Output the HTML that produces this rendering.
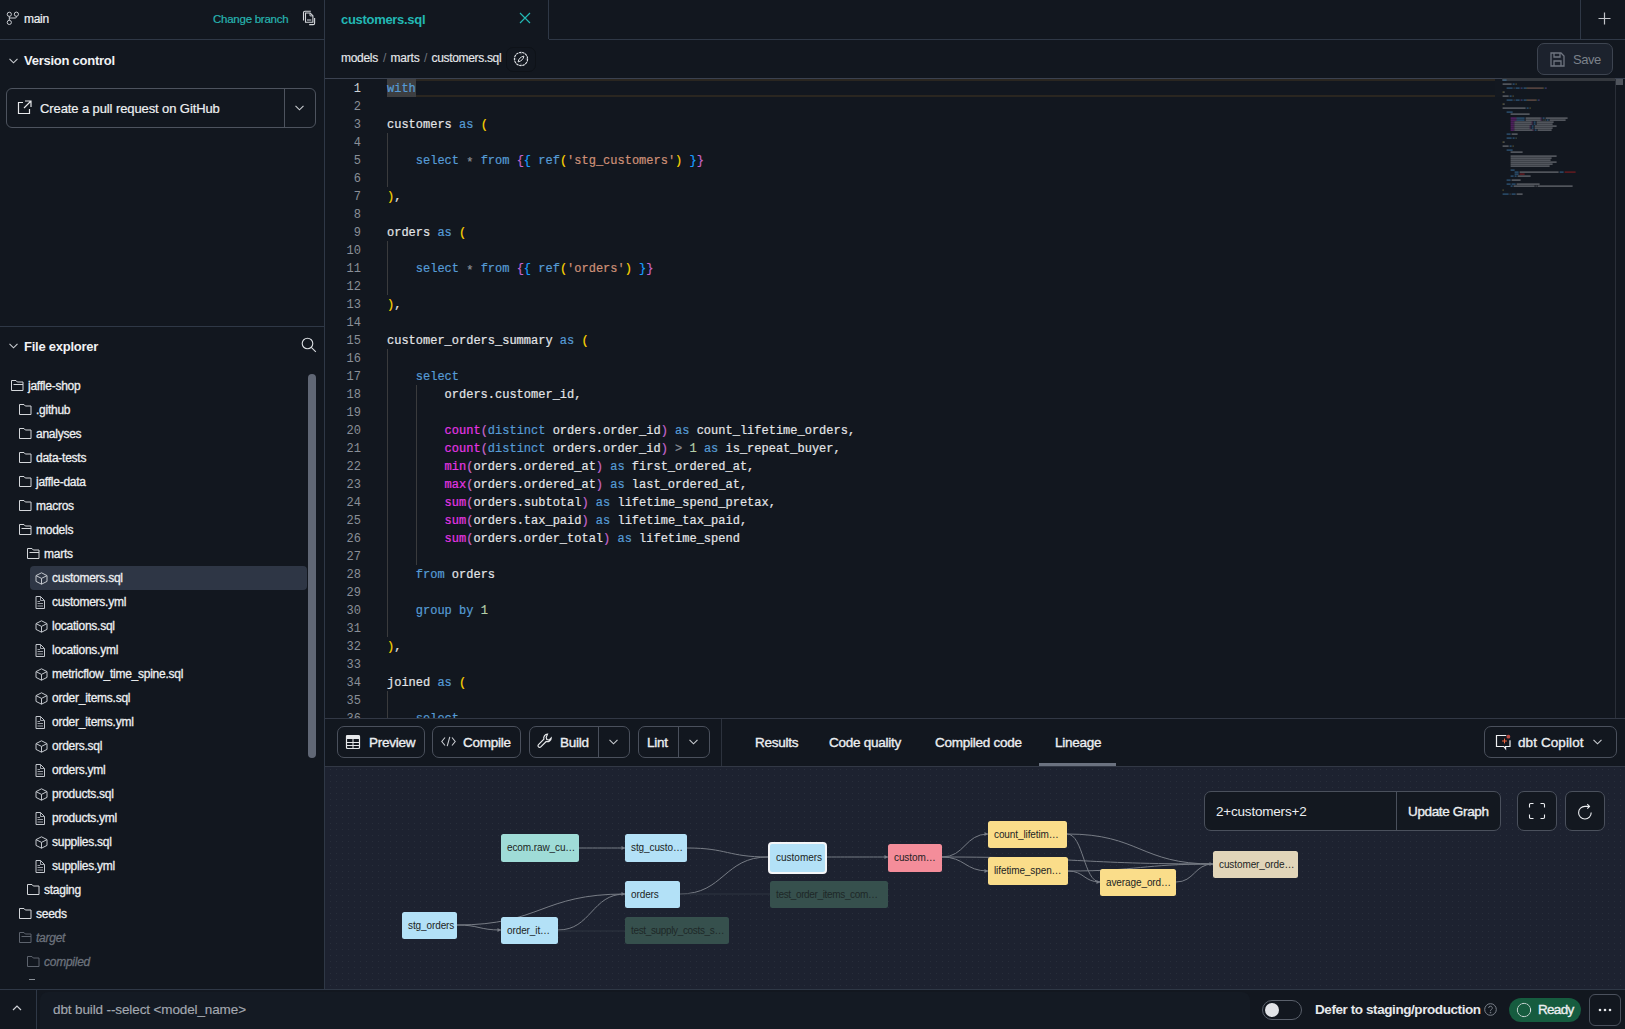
<!DOCTYPE html>
<html><head><meta charset="utf-8">
<style>
*{box-sizing:border-box;margin:0;padding:0}
html,body{width:1625px;height:1029px;overflow:hidden;background:#12171f;font-family:"Liberation Sans",sans-serif;color:#e6e8eb}
.a{position:absolute}
.t{white-space:pre;position:absolute;line-height:1}
.b{position:absolute;background:#2f3846}
svg{position:absolute;overflow:visible}
/* tree */
.tr{position:absolute;height:24px;font-size:12px;white-space:pre;line-height:24px;letter-spacing:-0.25px;color:#eef0f2;-webkit-text-stroke:0.28px currentColor}
.tr svg{top:6px}
/* code */
.ln{position:absolute;left:325px;width:36px;text-align:right;font-family:"Liberation Mono",monospace;font-size:12px;color:#8a8f98;line-height:18px;height:18px}
.cl{position:absolute;left:387px;font-family:"Liberation Mono",monospace;font-size:12px;color:#e3e5e8;line-height:18px;height:18px;white-space:pre;-webkit-text-stroke:0.2px currentColor}
.k{color:#569cd6}.f{color:#e535e5}.s{color:#ce9178}.y{color:#ffd700}.o{color:#c766cc}.u{color:#179fff}.g{color:#8b8f96}.n{color:#b5cea8}
.btn{position:absolute;border:1px solid #4a505c;border-radius:7px;height:32px}
.bt{position:absolute;font-size:13.5px;font-weight:400;-webkit-text-stroke:0.35px currentColor;letter-spacing:-0.25px;white-space:pre;line-height:1;color:#eceef1}
</style></head><body>

<!-- ============ SIDEBAR ============ -->
<div class="a" style="left:0;top:0;width:324px;height:989px;background:#12171f"></div>
<div class="b" style="left:324px;top:0;width:1px;height:989px"></div>
<div class="b" style="left:0;top:39px;width:324px;height:1px"></div>

<!-- branch icon -->
<svg style="left:6px;top:10px" width="14" height="16" viewBox="0 0 14 16" fill="none" stroke="#c9ccd1" stroke-width="1">
<circle cx="3.3" cy="4.3" r="2.1"/><circle cx="3.3" cy="12.4" r="2.1"/><circle cx="10.4" cy="4.2" r="2.1"/>
<path d="M3.3 6.4V10.3M10.4 6.3V7Q10.4 8 9.4 8H3.3"/></svg>
<div class="t" style="left:24px;top:13px;font-size:12px;color:#eef0f2;letter-spacing:-0.3px;-webkit-text-stroke:0.2px currentColor">main</div>
<div class="t" style="left:213px;top:14px;font-size:11.5px;color:#27b4b0;-webkit-text-stroke:0.2px currentColor;letter-spacing:-0.25px">Change branch</div>
<!-- copy icon -->
<svg style="left:300px;top:9px" width="18" height="18" viewBox="0 0 18 18" fill="none" stroke="#d4d7db" stroke-width="1.1">
<path d="M3.5 11.5V3.6Q3.5 2.2 4.9 2.2H10.8"/><path d="M14.6 9V14.2Q14.6 15.6 13.2 15.6H9.2"/>
<path d="M5.5 4H10.2L12.9 6.7V13.3H5.5Z"/><path d="M10 4V6.9H12.9" stroke-width="0.9"/><rect x="7" y="10.2" width="4.3" height="1.6" fill="#8d9198" stroke="none"/></svg>
<!-- version control -->
<svg style="left:9px;top:58px" width="9" height="6" viewBox="0 0 9 6" fill="none" stroke="#c9ccd1" stroke-width="1.1"><path d="M0.5 0.8L4.5 4.8L8.5 0.8"/></svg>
<div class="t" style="left:24px;top:54px;font-size:13px;font-weight:700;color:#f1f2f4;letter-spacing:-0.25px">Version control</div>

<div class="a" style="left:6px;top:88px;width:310px;height:40px;border:1px solid #4d535e;border-radius:6px"></div>
<div class="b" style="left:284px;top:89px;width:1px;height:38px;background:#4d535e"></div>
<svg style="left:17px;top:100px" width="15" height="15" viewBox="0 0 15 15" fill="none" stroke="#e6e8eb" stroke-width="1.2">
<path d="M6 2.5H1.5V13.5H12.5V9"/><path d="M8 1H14V7M14 1L7 8"/></svg>
<div class="t" style="left:40px;top:102px;font-size:13px;color:#eef0f2;letter-spacing:-0.1px;-webkit-text-stroke:0.2px currentColor">Create a pull request on GitHub</div>
<svg style="left:295px;top:105px" width="9" height="6" viewBox="0 0 9 6" fill="none" stroke="#c9ccd1" stroke-width="1.1"><path d="M0.5 0.8L4.5 4.8L8.5 0.8"/></svg>

<div class="b" style="left:0;top:326px;width:324px;height:1px"></div>

<!-- file explorer -->
<svg style="left:9px;top:343px" width="9" height="6" viewBox="0 0 9 6" fill="none" stroke="#c9ccd1" stroke-width="1.1"><path d="M0.5 0.8L4.5 4.8L8.5 0.8"/></svg>
<div class="t" style="left:24px;top:340px;font-size:13px;font-weight:700;color:#f1f2f4;letter-spacing:-0.25px">File explorer</div>
<svg style="left:301px;top:337px" width="16" height="16" viewBox="0 0 16 16" fill="none" stroke="#d9dce0" stroke-width="1.1">
<circle cx="6.5" cy="6.5" r="5.3"/><path d="M10.3 10.3L14.8 14.8"/></svg>

<!-- scrollbar -->
<div class="a" style="left:308px;top:374px;width:8px;height:384px;border-radius:4px;background:#606775"></div>

<!-- TREE -->
<svg style="left:11px;top:380px" width="13" height="12" viewBox="0 0 13 12" fill="none" stroke="#d4d7db" stroke-width="1"><path d="M0.5 0.5H5L6.3 2H12V10.5H0.5Z"/><path d="M2.5 4.5H12"/></svg>
<div class="tr" style="left:28px;top:374px">jaffle-shop</div>
<svg style="left:19px;top:404px" width="13" height="12" viewBox="0 0 13 12" fill="none" stroke="#d4d7db" stroke-width="1"><path d="M0.5 0.5H5L6.3 2H12V10.5H0.5Z"/></svg>
<div class="tr" style="left:36px;top:398px">.github</div>
<svg style="left:19px;top:428px" width="13" height="12" viewBox="0 0 13 12" fill="none" stroke="#d4d7db" stroke-width="1"><path d="M0.5 0.5H5L6.3 2H12V10.5H0.5Z"/></svg>
<div class="tr" style="left:36px;top:422px">analyses</div>
<svg style="left:19px;top:452px" width="13" height="12" viewBox="0 0 13 12" fill="none" stroke="#d4d7db" stroke-width="1"><path d="M0.5 0.5H5L6.3 2H12V10.5H0.5Z"/></svg>
<div class="tr" style="left:36px;top:446px">data-tests</div>
<svg style="left:19px;top:476px" width="13" height="12" viewBox="0 0 13 12" fill="none" stroke="#d4d7db" stroke-width="1"><path d="M0.5 0.5H5L6.3 2H12V10.5H0.5Z"/></svg>
<div class="tr" style="left:36px;top:470px">jaffle-data</div>
<svg style="left:19px;top:500px" width="13" height="12" viewBox="0 0 13 12" fill="none" stroke="#d4d7db" stroke-width="1"><path d="M0.5 0.5H5L6.3 2H12V10.5H0.5Z"/></svg>
<div class="tr" style="left:36px;top:494px">macros</div>
<svg style="left:19px;top:524px" width="13" height="12" viewBox="0 0 13 12" fill="none" stroke="#d4d7db" stroke-width="1"><path d="M0.5 0.5H5L6.3 2H12V10.5H0.5Z"/><path d="M2.5 4.5H12"/></svg>
<div class="tr" style="left:36px;top:518px">models</div>
<svg style="left:27px;top:548px" width="13" height="12" viewBox="0 0 13 12" fill="none" stroke="#d4d7db" stroke-width="1"><path d="M0.5 0.5H5L6.3 2H12V10.5H0.5Z"/><path d="M2.5 4.5H12"/></svg>
<div class="tr" style="left:44px;top:542px">marts</div>
<div class="a" style="left:30px;top:566px;width:277px;height:24px;border-radius:4px;background:#2e3645"></div>
<svg style="left:35px;top:572px" width="13" height="13" viewBox="0 0 13 13" fill="none" stroke="#c3c7cd" stroke-width="1"><path d="M6.5 0.8L12 3.6V9.4L6.5 12.2L1 9.4V3.6Z"/><path d="M1 3.6L6.5 6.4L12 3.6M6.5 6.4V12.2"/></svg>
<div class="tr" style="left:52px;top:566px">customers.sql</div>
<svg style="left:35px;top:596px" width="11" height="13" viewBox="0 0 11 13" fill="none" stroke="#c3c7cd" stroke-width="1"><path d="M1 0.5H5.5L9.5 4.5V12.5H1Z"/><path d="M5.5 0.5V4.5H9.5" stroke-width="0.8"/><path d="M2.5 5.5H5M2.5 7.5H8M2.5 10H8" stroke="#9a9ea5"/></svg>
<div class="tr" style="left:52px;top:590px">customers.yml</div>
<svg style="left:35px;top:620px" width="13" height="13" viewBox="0 0 13 13" fill="none" stroke="#c3c7cd" stroke-width="1"><path d="M6.5 0.8L12 3.6V9.4L6.5 12.2L1 9.4V3.6Z"/><path d="M1 3.6L6.5 6.4L12 3.6M6.5 6.4V12.2"/></svg>
<div class="tr" style="left:52px;top:614px">locations.sql</div>
<svg style="left:35px;top:644px" width="11" height="13" viewBox="0 0 11 13" fill="none" stroke="#c3c7cd" stroke-width="1"><path d="M1 0.5H5.5L9.5 4.5V12.5H1Z"/><path d="M5.5 0.5V4.5H9.5" stroke-width="0.8"/><path d="M2.5 5.5H5M2.5 7.5H8M2.5 10H8" stroke="#9a9ea5"/></svg>
<div class="tr" style="left:52px;top:638px">locations.yml</div>
<svg style="left:35px;top:668px" width="13" height="13" viewBox="0 0 13 13" fill="none" stroke="#c3c7cd" stroke-width="1"><path d="M6.5 0.8L12 3.6V9.4L6.5 12.2L1 9.4V3.6Z"/><path d="M1 3.6L6.5 6.4L12 3.6M6.5 6.4V12.2"/></svg>
<div class="tr" style="left:52px;top:662px">metricflow_time_spine.sql</div>
<svg style="left:35px;top:692px" width="13" height="13" viewBox="0 0 13 13" fill="none" stroke="#c3c7cd" stroke-width="1"><path d="M6.5 0.8L12 3.6V9.4L6.5 12.2L1 9.4V3.6Z"/><path d="M1 3.6L6.5 6.4L12 3.6M6.5 6.4V12.2"/></svg>
<div class="tr" style="left:52px;top:686px">order_items.sql</div>
<svg style="left:35px;top:716px" width="11" height="13" viewBox="0 0 11 13" fill="none" stroke="#c3c7cd" stroke-width="1"><path d="M1 0.5H5.5L9.5 4.5V12.5H1Z"/><path d="M5.5 0.5V4.5H9.5" stroke-width="0.8"/><path d="M2.5 5.5H5M2.5 7.5H8M2.5 10H8" stroke="#9a9ea5"/></svg>
<div class="tr" style="left:52px;top:710px">order_items.yml</div>
<svg style="left:35px;top:740px" width="13" height="13" viewBox="0 0 13 13" fill="none" stroke="#c3c7cd" stroke-width="1"><path d="M6.5 0.8L12 3.6V9.4L6.5 12.2L1 9.4V3.6Z"/><path d="M1 3.6L6.5 6.4L12 3.6M6.5 6.4V12.2"/></svg>
<div class="tr" style="left:52px;top:734px">orders.sql</div>
<svg style="left:35px;top:764px" width="11" height="13" viewBox="0 0 11 13" fill="none" stroke="#c3c7cd" stroke-width="1"><path d="M1 0.5H5.5L9.5 4.5V12.5H1Z"/><path d="M5.5 0.5V4.5H9.5" stroke-width="0.8"/><path d="M2.5 5.5H5M2.5 7.5H8M2.5 10H8" stroke="#9a9ea5"/></svg>
<div class="tr" style="left:52px;top:758px">orders.yml</div>
<svg style="left:35px;top:788px" width="13" height="13" viewBox="0 0 13 13" fill="none" stroke="#c3c7cd" stroke-width="1"><path d="M6.5 0.8L12 3.6V9.4L6.5 12.2L1 9.4V3.6Z"/><path d="M1 3.6L6.5 6.4L12 3.6M6.5 6.4V12.2"/></svg>
<div class="tr" style="left:52px;top:782px">products.sql</div>
<svg style="left:35px;top:812px" width="11" height="13" viewBox="0 0 11 13" fill="none" stroke="#c3c7cd" stroke-width="1"><path d="M1 0.5H5.5L9.5 4.5V12.5H1Z"/><path d="M5.5 0.5V4.5H9.5" stroke-width="0.8"/><path d="M2.5 5.5H5M2.5 7.5H8M2.5 10H8" stroke="#9a9ea5"/></svg>
<div class="tr" style="left:52px;top:806px">products.yml</div>
<svg style="left:35px;top:836px" width="13" height="13" viewBox="0 0 13 13" fill="none" stroke="#c3c7cd" stroke-width="1"><path d="M6.5 0.8L12 3.6V9.4L6.5 12.2L1 9.4V3.6Z"/><path d="M1 3.6L6.5 6.4L12 3.6M6.5 6.4V12.2"/></svg>
<div class="tr" style="left:52px;top:830px">supplies.sql</div>
<svg style="left:35px;top:860px" width="11" height="13" viewBox="0 0 11 13" fill="none" stroke="#c3c7cd" stroke-width="1"><path d="M1 0.5H5.5L9.5 4.5V12.5H1Z"/><path d="M5.5 0.5V4.5H9.5" stroke-width="0.8"/><path d="M2.5 5.5H5M2.5 7.5H8M2.5 10H8" stroke="#9a9ea5"/></svg>
<div class="tr" style="left:52px;top:854px">supplies.yml</div>
<svg style="left:27px;top:884px" width="13" height="12" viewBox="0 0 13 12" fill="none" stroke="#d4d7db" stroke-width="1"><path d="M0.5 0.5H5L6.3 2H12V10.5H0.5Z"/></svg>
<div class="tr" style="left:44px;top:878px">staging</div>
<svg style="left:19px;top:908px" width="13" height="12" viewBox="0 0 13 12" fill="none" stroke="#d4d7db" stroke-width="1"><path d="M0.5 0.5H5L6.3 2H12V10.5H0.5Z"/></svg>
<div class="tr" style="left:36px;top:902px">seeds</div>
<svg style="left:19px;top:932px" width="13" height="12" viewBox="0 0 13 12" fill="none" stroke="#5d636d" stroke-width="1"><path d="M0.5 0.5H5L6.3 2H12V10.5H0.5Z"/><path d="M2.5 4.5H12"/></svg>
<div class="tr" style="left:36px;top:926px;font-style:italic;color:#6c727c">target</div>
<svg style="left:27px;top:956px" width="13" height="12" viewBox="0 0 13 12" fill="none" stroke="#5d636d" stroke-width="1"><path d="M0.5 0.5H5L6.3 2H12V10.5H0.5Z"/></svg>
<div class="tr" style="left:44px;top:950px;font-style:italic;color:#6c727c">compiled</div>
<div class="a" style="left:29px;top:979px;width:6px;height:1px;background:#8a9098"></div>


<!-- ============ MAIN: TABS ============ -->
<div class="b" style="left:548px;top:0;width:1px;height:39px"></div>
<div class="b" style="left:549px;top:39px;width:1076px;height:1px"></div>
<div class="b" style="left:1580px;top:0;width:1px;height:39px"></div>
<div class="t" style="left:341px;top:13px;font-size:13px;font-weight:700;color:#22b8b4;letter-spacing:-0.3px">customers.sql</div>
<svg style="left:519px;top:12px" width="12" height="12" viewBox="0 0 12 12" fill="none" stroke="#22b8b4" stroke-width="1.2"><path d="M1 1L11 11M11 1L1 11"/></svg>
<svg style="left:1598px;top:12px" width="13" height="13" viewBox="0 0 13 13" fill="none" stroke="#c2c5ca" stroke-width="1.2"><path d="M6.5 0.5V12.5M0.5 6.5H12.5"/></svg>

<!-- breadcrumb -->
<div class="t" style="left:341px;top:52px;font-size:12px;color:#e6e8eb;letter-spacing:-0.3px;-webkit-text-stroke:0.15px currentColor">models</div>
<div class="t" style="left:383px;top:52px;font-size:12px;color:#6f757e">/</div>
<div class="t" style="left:390.5px;top:52px;font-size:12px;color:#e6e8eb;letter-spacing:-0.2px;-webkit-text-stroke:0.15px currentColor">marts</div>
<div class="t" style="left:424px;top:52px;font-size:12px;color:#6f757e">/</div>
<div class="t" style="left:431.5px;top:52px;font-size:12px;color:#e6e8eb;letter-spacing:-0.33px;-webkit-text-stroke:0.15px currentColor">customers.sql</div>
<div class="a" style="left:506px;top:47px;width:30px;height:25px;border-radius:7px;border:1px solid #0e1218;background:#12171f"></div>
<svg style="left:513px;top:51px" width="16" height="16" viewBox="0 0 16 16" fill="none" stroke="#dfe2e6" stroke-width="1.1">
<circle cx="8" cy="8" r="6.6" stroke-dasharray="2.6 0.6"/><path d="M8 2.2V3.4M8 12.6V13.8M2.2 8H3.4M12.6 8H13.8" stroke="#8a8f96" stroke-width="0.9"/><path d="M10.9 5.1Q10.3 9.6 5.1 10.9Q5.7 6.4 10.9 5.1Z" stroke-width="1"/></svg>
<div class="a" style="left:1537px;top:43px;width:76px;height:32px;border:1px solid #3d4450;border-radius:7px;background:#1c222d"></div>
<svg style="left:1550px;top:52px" width="15" height="15" viewBox="0 0 15 15" fill="none" stroke="#6f7580" stroke-width="1.3"><path d="M1 1H11L14 4V14H1Z"/><path d="M4 1V5H10V1M4 14V9H11V14"/></svg>
<div class="t" style="left:1573px;top:53px;font-size:13px;color:#7b818a;letter-spacing:-0.5px">Save</div>
<div class="b" style="left:325px;top:78px;width:1300px;height:1px;background:#3b4250"></div>

<!-- ============ EDITOR ============ -->
<div class="a" style="left:0;top:0;width:1625px;height:718px;overflow:hidden">
<div class="a" style="left:387px;top:79px;width:1109px;height:18px;border-top:2px solid #2a2620;border-bottom:2px solid #2a2620"></div>
<div class="a" style="left:387px;top:79px;width:29px;height:18px;background:#3d3e40"></div>
<div class="a" style="left:387px;top:133px;width:1px;height:54px;background:#3a3b3d"></div>
<div class="a" style="left:387px;top:241px;width:1px;height:54px;background:#3a3b3d"></div>
<div class="a" style="left:387px;top:349px;width:1px;height:288px;background:#3a3b3d"></div>
<div class="a" style="left:387px;top:691px;width:1px;height:36px;background:#3a3b3d"></div>
<div class="a" style="left:416px;top:385px;width:1px;height:180px;background:#3a3b3d"></div>
<div class="ln" style="top:80px;color:#cfd2d6">1</div>
<div class="cl" style="top:80px"><span class="k">with</span></div>
<div class="ln" style="top:98px">2</div>
<div class="ln" style="top:116px">3</div>
<div class="cl" style="top:116px">customers <span class="k">as</span> <span class="y">(</span></div>
<div class="ln" style="top:134px">4</div>
<div class="ln" style="top:152px">5</div>
<div class="cl" style="top:152px">    <span class="k">select</span> <span class="g" style="position:relative;top:2px">*</span> <span class="k">from</span> <span class="o">{</span><span class="u">{</span> <span class="k">ref</span><span class="y">(</span><span class="s">'stg_customers'</span><span class="y">)</span> <span class="u">}</span><span class="o">}</span></div>
<div class="ln" style="top:170px">6</div>
<div class="ln" style="top:188px">7</div>
<div class="cl" style="top:188px"><span class="y">)</span>,</div>
<div class="ln" style="top:206px">8</div>
<div class="ln" style="top:224px">9</div>
<div class="cl" style="top:224px">orders <span class="k">as</span> <span class="y">(</span></div>
<div class="ln" style="top:242px">10</div>
<div class="ln" style="top:260px">11</div>
<div class="cl" style="top:260px">    <span class="k">select</span> <span class="g" style="position:relative;top:2px">*</span> <span class="k">from</span> <span class="o">{</span><span class="u">{</span> <span class="k">ref</span><span class="y">(</span><span class="s">'orders'</span><span class="y">)</span> <span class="u">}</span><span class="o">}</span></div>
<div class="ln" style="top:278px">12</div>
<div class="ln" style="top:296px">13</div>
<div class="cl" style="top:296px"><span class="y">)</span>,</div>
<div class="ln" style="top:314px">14</div>
<div class="ln" style="top:332px">15</div>
<div class="cl" style="top:332px">customer_orders_summary <span class="k">as</span> <span class="y">(</span></div>
<div class="ln" style="top:350px">16</div>
<div class="ln" style="top:368px">17</div>
<div class="cl" style="top:368px">    <span class="k">select</span></div>
<div class="ln" style="top:386px">18</div>
<div class="cl" style="top:386px">        orders.customer_id,</div>
<div class="ln" style="top:404px">19</div>
<div class="ln" style="top:422px">20</div>
<div class="cl" style="top:422px">        <span class="f">count</span><span class="o">(</span><span class="k">distinct</span> orders.order_id<span class="o">)</span> <span class="k">as</span> count_lifetime_orders,</div>
<div class="ln" style="top:440px">21</div>
<div class="cl" style="top:440px">        <span class="f">count</span><span class="o">(</span><span class="k">distinct</span> orders.order_id<span class="o">)</span> <span class="g">&gt;</span> <span class="n">1</span> <span class="k">as</span> is_repeat_buyer,</div>
<div class="ln" style="top:458px">22</div>
<div class="cl" style="top:458px">        <span class="f">min</span><span class="o">(</span>orders.ordered_at<span class="o">)</span> <span class="k">as</span> first_ordered_at,</div>
<div class="ln" style="top:476px">23</div>
<div class="cl" style="top:476px">        <span class="f">max</span><span class="o">(</span>orders.ordered_at<span class="o">)</span> <span class="k">as</span> last_ordered_at,</div>
<div class="ln" style="top:494px">24</div>
<div class="cl" style="top:494px">        <span class="f">sum</span><span class="o">(</span>orders.subtotal<span class="o">)</span> <span class="k">as</span> lifetime_spend_pretax,</div>
<div class="ln" style="top:512px">25</div>
<div class="cl" style="top:512px">        <span class="f">sum</span><span class="o">(</span>orders.tax_paid<span class="o">)</span> <span class="k">as</span> lifetime_tax_paid,</div>
<div class="ln" style="top:530px">26</div>
<div class="cl" style="top:530px">        <span class="f">sum</span><span class="o">(</span>orders.order_total<span class="o">)</span> <span class="k">as</span> lifetime_spend</div>
<div class="ln" style="top:548px">27</div>
<div class="ln" style="top:566px">28</div>
<div class="cl" style="top:566px">    <span class="k">from</span> orders</div>
<div class="ln" style="top:584px">29</div>
<div class="ln" style="top:602px">30</div>
<div class="cl" style="top:602px">    <span class="k">group</span> <span class="k">by</span> <span class="n">1</span></div>
<div class="ln" style="top:620px">31</div>
<div class="ln" style="top:638px">32</div>
<div class="cl" style="top:638px"><span class="y">)</span>,</div>
<div class="ln" style="top:656px">33</div>
<div class="ln" style="top:674px">34</div>
<div class="cl" style="top:674px">joined <span class="k">as</span> <span class="y">(</span></div>
<div class="ln" style="top:692px">35</div>
<div class="ln" style="top:710px">36</div>
<div class="cl" style="top:710px">    <span class="k">select</span></div>
<svg style="left:0;top:0" width="1625" height="718" viewBox="0 0 1625 718">
<rect x="1502" y="78" width="113" height="3" fill="#34383e"/>
<rect x="1495" y="79" width="7" height="18" fill="#131820"/>
<rect x="1502.6" y="79.5" width="4" height="1.2" fill="#4f9fe0" opacity="0.5"/>
<rect x="1502.6" y="83.5" width="9" height="1.2" fill="#c8cacd" opacity="0.5"/>
<rect x="1512.6" y="83.5" width="2" height="1.2" fill="#4f9fe0" opacity="0.5"/>
<rect x="1515.6" y="83.5" width="1" height="1.2" fill="#d8c050" opacity="0.5"/>
<rect x="1506.6" y="87.5" width="6" height="1.2" fill="#4f9fe0" opacity="0.5"/>
<rect x="1513.6" y="87.5" width="1" height="1.2" fill="#888" opacity="0.5"/>
<rect x="1515.6" y="87.5" width="4" height="1.2" fill="#4f9fe0" opacity="0.5"/>
<rect x="1520.6" y="87.5" width="1" height="1.2" fill="#c060c0" opacity="0.5"/>
<rect x="1521.6" y="87.5" width="1" height="1.2" fill="#2090f0" opacity="0.5"/>
<rect x="1523.6" y="87.5" width="3" height="1.2" fill="#4f9fe0" opacity="0.5"/>
<rect x="1526.6" y="87.5" width="1" height="1.2" fill="#d8c050" opacity="0.5"/>
<rect x="1527.6" y="87.5" width="15" height="1.2" fill="#ce9178" opacity="0.5"/>
<rect x="1542.6" y="87.5" width="1" height="1.2" fill="#d8c050" opacity="0.5"/>
<rect x="1544.6" y="87.5" width="1" height="1.2" fill="#2090f0" opacity="0.5"/>
<rect x="1545.6" y="87.5" width="1" height="1.2" fill="#c060c0" opacity="0.5"/>
<rect x="1502.6" y="91.5" width="1" height="1.2" fill="#d8c050" opacity="0.5"/>
<rect x="1503.6" y="91.5" width="1" height="1.2" fill="#c8cacd" opacity="0.5"/>
<rect x="1502.6" y="95.5" width="6" height="1.2" fill="#c8cacd" opacity="0.5"/>
<rect x="1509.6" y="95.5" width="2" height="1.2" fill="#4f9fe0" opacity="0.5"/>
<rect x="1512.6" y="95.5" width="1" height="1.2" fill="#d8c050" opacity="0.5"/>
<rect x="1506.6" y="99.5" width="6" height="1.2" fill="#4f9fe0" opacity="0.5"/>
<rect x="1513.6" y="99.5" width="1" height="1.2" fill="#888" opacity="0.5"/>
<rect x="1515.6" y="99.5" width="4" height="1.2" fill="#4f9fe0" opacity="0.5"/>
<rect x="1520.6" y="99.5" width="1" height="1.2" fill="#c060c0" opacity="0.5"/>
<rect x="1521.6" y="99.5" width="1" height="1.2" fill="#2090f0" opacity="0.5"/>
<rect x="1523.6" y="99.5" width="3" height="1.2" fill="#4f9fe0" opacity="0.5"/>
<rect x="1526.6" y="99.5" width="1" height="1.2" fill="#d8c050" opacity="0.5"/>
<rect x="1527.6" y="99.5" width="8" height="1.2" fill="#ce9178" opacity="0.5"/>
<rect x="1535.6" y="99.5" width="1" height="1.2" fill="#d8c050" opacity="0.5"/>
<rect x="1537.6" y="99.5" width="1" height="1.2" fill="#2090f0" opacity="0.5"/>
<rect x="1538.6" y="99.5" width="1" height="1.2" fill="#c060c0" opacity="0.5"/>
<rect x="1502.6" y="103.5" width="1" height="1.2" fill="#d8c050" opacity="0.5"/>
<rect x="1503.6" y="103.5" width="1" height="1.2" fill="#c8cacd" opacity="0.5"/>
<rect x="1502.6" y="107.5" width="23" height="1.2" fill="#c8cacd" opacity="0.5"/>
<rect x="1526.6" y="107.5" width="2" height="1.2" fill="#4f9fe0" opacity="0.5"/>
<rect x="1529.6" y="107.5" width="1" height="1.2" fill="#d8c050" opacity="0.5"/>
<rect x="1506.6" y="111.5" width="6" height="1.2" fill="#4f9fe0" opacity="0.5"/>
<rect x="1510.6" y="113.5" width="19" height="1.2" fill="#c8cacd" opacity="0.5"/>
<rect x="1510.6" y="117.5" width="5" height="1.2" fill="#c030d0" opacity="0.5"/>
<rect x="1515.6" y="117.5" width="1" height="1.2" fill="#c060c0" opacity="0.5"/>
<rect x="1516.6" y="117.5" width="8" height="1.2" fill="#4f9fe0" opacity="0.5"/>
<rect x="1525.6" y="117.5" width="15" height="1.2" fill="#c8cacd" opacity="0.5"/>
<rect x="1540.6" y="117.5" width="1" height="1.2" fill="#c060c0" opacity="0.5"/>
<rect x="1542.6" y="117.5" width="2" height="1.2" fill="#4f9fe0" opacity="0.5"/>
<rect x="1545.6" y="117.5" width="22" height="1.2" fill="#c8cacd" opacity="0.5"/>
<rect x="1510.6" y="119.5" width="5" height="1.2" fill="#c030d0" opacity="0.5"/>
<rect x="1515.6" y="119.5" width="1" height="1.2" fill="#c060c0" opacity="0.5"/>
<rect x="1516.6" y="119.5" width="8" height="1.2" fill="#4f9fe0" opacity="0.5"/>
<rect x="1525.6" y="119.5" width="15" height="1.2" fill="#c8cacd" opacity="0.5"/>
<rect x="1540.6" y="119.5" width="1" height="1.2" fill="#c060c0" opacity="0.5"/>
<rect x="1542.6" y="119.5" width="1" height="1.2" fill="#888" opacity="0.5"/>
<rect x="1544.6" y="119.5" width="1" height="1.2" fill="#a8c898" opacity="0.5"/>
<rect x="1546.6" y="119.5" width="2" height="1.2" fill="#4f9fe0" opacity="0.5"/>
<rect x="1549.6" y="119.5" width="16" height="1.2" fill="#c8cacd" opacity="0.5"/>
<rect x="1510.6" y="121.5" width="3" height="1.2" fill="#c030d0" opacity="0.5"/>
<rect x="1513.6" y="121.5" width="1" height="1.2" fill="#c060c0" opacity="0.5"/>
<rect x="1514.6" y="121.5" width="17" height="1.2" fill="#c8cacd" opacity="0.5"/>
<rect x="1531.6" y="121.5" width="1" height="1.2" fill="#c060c0" opacity="0.5"/>
<rect x="1533.6" y="121.5" width="2" height="1.2" fill="#4f9fe0" opacity="0.5"/>
<rect x="1536.6" y="121.5" width="17" height="1.2" fill="#c8cacd" opacity="0.5"/>
<rect x="1510.6" y="123.5" width="3" height="1.2" fill="#c030d0" opacity="0.5"/>
<rect x="1513.6" y="123.5" width="1" height="1.2" fill="#c060c0" opacity="0.5"/>
<rect x="1514.6" y="123.5" width="17" height="1.2" fill="#c8cacd" opacity="0.5"/>
<rect x="1531.6" y="123.5" width="1" height="1.2" fill="#c060c0" opacity="0.5"/>
<rect x="1533.6" y="123.5" width="2" height="1.2" fill="#4f9fe0" opacity="0.5"/>
<rect x="1536.6" y="123.5" width="16" height="1.2" fill="#c8cacd" opacity="0.5"/>
<rect x="1510.6" y="125.5" width="3" height="1.2" fill="#c030d0" opacity="0.5"/>
<rect x="1513.6" y="125.5" width="1" height="1.2" fill="#c060c0" opacity="0.5"/>
<rect x="1514.6" y="125.5" width="15" height="1.2" fill="#c8cacd" opacity="0.5"/>
<rect x="1529.6" y="125.5" width="1" height="1.2" fill="#c060c0" opacity="0.5"/>
<rect x="1531.6" y="125.5" width="2" height="1.2" fill="#4f9fe0" opacity="0.5"/>
<rect x="1534.6" y="125.5" width="22" height="1.2" fill="#c8cacd" opacity="0.5"/>
<rect x="1510.6" y="127.5" width="3" height="1.2" fill="#c030d0" opacity="0.5"/>
<rect x="1513.6" y="127.5" width="1" height="1.2" fill="#c060c0" opacity="0.5"/>
<rect x="1514.6" y="127.5" width="15" height="1.2" fill="#c8cacd" opacity="0.5"/>
<rect x="1529.6" y="127.5" width="1" height="1.2" fill="#c060c0" opacity="0.5"/>
<rect x="1531.6" y="127.5" width="2" height="1.2" fill="#4f9fe0" opacity="0.5"/>
<rect x="1534.6" y="127.5" width="18" height="1.2" fill="#c8cacd" opacity="0.5"/>
<rect x="1510.6" y="129.5" width="3" height="1.2" fill="#c030d0" opacity="0.5"/>
<rect x="1513.6" y="129.5" width="1" height="1.2" fill="#c060c0" opacity="0.5"/>
<rect x="1514.6" y="129.5" width="18" height="1.2" fill="#c8cacd" opacity="0.5"/>
<rect x="1532.6" y="129.5" width="1" height="1.2" fill="#c060c0" opacity="0.5"/>
<rect x="1534.6" y="129.5" width="2" height="1.2" fill="#4f9fe0" opacity="0.5"/>
<rect x="1537.6" y="129.5" width="14" height="1.2" fill="#c8cacd" opacity="0.5"/>
<rect x="1506.6" y="133.5" width="4" height="1.2" fill="#4f9fe0" opacity="0.5"/>
<rect x="1511.6" y="133.5" width="6" height="1.2" fill="#c8cacd" opacity="0.5"/>
<rect x="1506.6" y="137.5" width="5" height="1.2" fill="#4f9fe0" opacity="0.5"/>
<rect x="1512.6" y="137.5" width="2" height="1.2" fill="#4f9fe0" opacity="0.5"/>
<rect x="1515.6" y="137.5" width="1" height="1.2" fill="#a8c898" opacity="0.5"/>
<rect x="1502.6" y="141.5" width="1" height="1.2" fill="#d8c050" opacity="0.5"/>
<rect x="1503.6" y="141.5" width="1" height="1.2" fill="#c8cacd" opacity="0.5"/>
<rect x="1502.6" y="145.5" width="6" height="1.2" fill="#c8cacd" opacity="0.5"/>
<rect x="1509.6" y="145.5" width="2" height="1.2" fill="#4f9fe0" opacity="0.5"/>
<rect x="1512.6" y="145.5" width="1" height="1.2" fill="#d8c050" opacity="0.5"/>
<rect x="1506.6" y="149.5" width="6" height="1.2" fill="#4f9fe0" opacity="0.5"/>
<rect x="1510.6" y="151.5" width="12" height="1.2" fill="#c8cacd" opacity="0.5"/>
<rect x="1510.6" y="155.5" width="46" height="1.2" fill="#c8cacd" opacity="0.5"/>
<rect x="1510.6" y="157.5" width="41" height="1.2" fill="#c8cacd" opacity="0.5"/>
<rect x="1510.6" y="159.5" width="40" height="1.2" fill="#c8cacd" opacity="0.5"/>
<rect x="1510.6" y="161.5" width="46" height="1.2" fill="#c8cacd" opacity="0.5"/>
<rect x="1510.6" y="163.5" width="42" height="1.2" fill="#c8cacd" opacity="0.5"/>
<rect x="1510.6" y="165.5" width="39" height="1.2" fill="#c8cacd" opacity="0.5"/>
<rect x="1510.6" y="169.5" width="4" height="1.2" fill="#4f9fe0" opacity="0.5"/>
<rect x="1514.6" y="171.5" width="4" height="1.2" fill="#4f9fe0" opacity="0.5"/>
<rect x="1519.6" y="171.5" width="39" height="1.2" fill="#c8cacd" opacity="0.5"/>
<rect x="1559.6" y="171.5" width="4" height="1.2" fill="#4f9fe0" opacity="0.5"/>
<rect x="1564.6" y="171.5" width="11" height="1.2" fill="#e02020" opacity="0.5"/>
<rect x="1514.6" y="173.5" width="4" height="1.2" fill="#4f9fe0" opacity="0.5"/>
<rect x="1519.6" y="173.5" width="5" height="1.2" fill="#e02020" opacity="0.5"/>
<rect x="1510.6" y="175.5" width="3" height="1.2" fill="#4f9fe0" opacity="0.5"/>
<rect x="1514.6" y="175.5" width="2" height="1.2" fill="#4f9fe0" opacity="0.5"/>
<rect x="1517.6" y="175.5" width="13" height="1.2" fill="#c8cacd" opacity="0.5"/>
<rect x="1506.6" y="179.5" width="4" height="1.2" fill="#4f9fe0" opacity="0.5"/>
<rect x="1511.6" y="179.5" width="9" height="1.2" fill="#c8cacd" opacity="0.5"/>
<rect x="1506.6" y="183.5" width="4" height="1.2" fill="#4f9fe0" opacity="0.5"/>
<rect x="1511.6" y="183.5" width="4" height="1.2" fill="#4f9fe0" opacity="0.5"/>
<rect x="1516.6" y="183.5" width="23" height="1.2" fill="#c8cacd" opacity="0.5"/>
<rect x="1510.6" y="185.5" width="2" height="1.2" fill="#4f9fe0" opacity="0.5"/>
<rect x="1513.6" y="185.5" width="21" height="1.2" fill="#c8cacd" opacity="0.5"/>
<rect x="1535.6" y="185.5" width="1" height="1.2" fill="#c8cacd" opacity="0.5"/>
<rect x="1537.6" y="185.5" width="35" height="1.2" fill="#c8cacd" opacity="0.5"/>
<rect x="1502.6" y="189.5" width="1" height="1.2" fill="#d8c050" opacity="0.5"/>
<rect x="1502.6" y="193.5" width="6" height="1.2" fill="#4f9fe0" opacity="0.5"/>
<rect x="1509.6" y="193.5" width="1" height="1.2" fill="#888" opacity="0.5"/>
<rect x="1511.6" y="193.5" width="4" height="1.2" fill="#4f9fe0" opacity="0.5"/>
<rect x="1516.6" y="193.5" width="6" height="1.2" fill="#c8cacd" opacity="0.5"/>
<rect x="1615" y="79" width="1" height="639" fill="#2a2f38"/>
<rect x="1616" y="79" width="7" height="6" fill="#50555d"/>
</svg>
</div>

<!-- ============ TOOLBAR ============ -->
<div class="b" style="left:325px;top:718px;width:1300px;height:1px;background:#323845"></div>
<div class="a" style="left:325px;top:719px;width:1300px;height:47px;background:#12171f"></div>
<div class="btn" style="left:337px;top:726px;width:88px"></div>
<svg style="left:345px;top:734px" width="16" height="16" viewBox="0 0 16 16"><rect x="1.5" y="1.5" width="13" height="13" rx="1" fill="none" stroke="#e6e8eb" stroke-width="1.2"/><rect x="1.5" y="1.5" width="13" height="3.5" fill="#e6e8eb"/><path d="M1.5 8.5H14.5M1.5 11.5H14.5M8 5V14.5" stroke="#e6e8eb" stroke-width="1"/></svg>
<div class="bt" style="left:369px;top:736px">Preview</div>
<div class="btn" style="left:432px;top:726px;width:89px"></div>
<svg style="left:441px;top:736px" width="15" height="11" viewBox="0 0 15 11" fill="none" stroke="#c9ccd1" stroke-width="1.1"><path d="M4 1.5L0.8 5.5L4 9.5M11 1.5L14.2 5.5L11 9.5M8.8 0.8L6.2 10.2"/></svg>
<div class="bt" style="left:463px;top:736px">Compile</div>
<div class="btn" style="left:529px;top:726px;width:101px"></div>
<div class="b" style="left:598px;top:727px;width:1px;height:30px;background:#4a505c"></div>
<svg style="left:537px;top:733px" width="16" height="16" viewBox="0 0 16 16" fill="none" stroke="#e6e8eb" stroke-width="1.2"><path d="M10.5 1.2a3.8 3.8 0 0 0-3.6 5L1.5 11.6a1.6 1.6 0 0 0 2.3 2.3L9.2 8.5a3.8 3.8 0 0 0 5-3.6l-2.2 2.2-2.2-.6-.6-2.2z"/></svg>
<div class="bt" style="left:560px;top:736px">Build</div>
<svg style="left:609px;top:739px" width="9" height="6" viewBox="0 0 9 6" fill="none" stroke="#c9ccd1" stroke-width="1.1"><path d="M0.5 0.8L4.5 4.8L8.5 0.8"/></svg>
<div class="btn" style="left:638px;top:726px;width:72px"></div>
<div class="b" style="left:678px;top:727px;width:1px;height:30px;background:#4a505c"></div>
<div class="bt" style="left:647px;top:736px">Lint</div>
<svg style="left:689px;top:739px" width="9" height="6" viewBox="0 0 9 6" fill="none" stroke="#c9ccd1" stroke-width="1.1"><path d="M0.5 0.8L4.5 4.8L8.5 0.8"/></svg>
<div class="b" style="left:721px;top:719px;width:1px;height:47px;background:#2c323d"></div>
<div class="bt" style="left:755px;top:736px;font-size:13.5px">Results</div>
<div class="bt" style="left:829px;top:736px;font-size:13.5px">Code quality</div>
<div class="bt" style="left:935px;top:736px;font-size:13.5px">Compiled code</div>
<div class="bt" style="left:1055px;top:736px;font-size:13.5px">Lineage</div>
<div class="b" style="left:1039px;top:763px;width:77px;height:3px;background:#6b7280"></div>
<div class="btn" style="left:1484px;top:726px;width:133px"></div>
<svg style="left:1494px;top:733px" width="18" height="18" viewBox="0 0 18 18" fill="none" stroke="#eef0f2" stroke-width="1.2"><path d="M12.3 2.5H2.5V13.5H9.8L11.6 15.8V13.5H16V7.2"/><circle cx="14.4" cy="3.7" r="1.9" fill="#b94a42" stroke="none"/><path d="M10.5 5.6V10.4M8.1 8H12.9" stroke="#f0643c" stroke-width="1"/></svg>
<div class="bt" style="left:1518px;top:736px;letter-spacing:0.1px">dbt Copilot</div>
<svg style="left:1593px;top:739px" width="9" height="6" viewBox="0 0 9 6" fill="none" stroke="#c9ccd1" stroke-width="1.1"><path d="M0.5 0.8L4.5 4.8L8.5 0.8"/></svg>
<div class="b" style="left:325px;top:766px;width:1300px;height:1px;background:#323845"></div>

<!-- ============ LINEAGE ============ -->
<svg style="left:325px;top:767px" width="1300" height="222">
<defs><pattern id="dots" x="5" y="2" width="6" height="6" patternUnits="userSpaceOnUse"><rect width="1" height="1" fill="#282e3b"/></pattern></defs>
<rect width="1300" height="222" fill="#1d2230"/><rect width="1300" height="222" fill="url(#dots)"/>
</svg>
<svg style="left:0;top:0" width="1625" height="1029" viewBox="0 0 1625 1029">
<path d="M579 848C602.0 848 602.0 848 625 848" fill="none" stroke="#777c85" stroke-width="1"/>
<path d="M687 848C727.5 848 727.5 857 768 857" fill="none" stroke="#777c85" stroke-width="1"/>
<path d="M680 894C724.0 894 724.0 857 768 857" fill="none" stroke="#777c85" stroke-width="1"/>
<path d="M457 925C541.0 925 541.0 894 625 894" fill="none" stroke="#777c85" stroke-width="1"/>
<path d="M457 925C479.0 925 479.0 930 501 930" fill="none" stroke="#777c85" stroke-width="1"/>
<path d="M558 930C591.5 930 591.5 894 625 894" fill="none" stroke="#777c85" stroke-width="1"/>
<path d="M826 857C857.0 857 857.0 857 888 857" fill="none" stroke="#777c85" stroke-width="1"/>
<path d="M942 857C965.0 857 965.0 834 988 834" fill="none" stroke="#777c85" stroke-width="1"/>
<path d="M942 857C965.0 857 965.0 871 988 871" fill="none" stroke="#777c85" stroke-width="1"/>
<path d="M942 857C1077.5 857 1077.5 864 1213 864" fill="none" stroke="#777c85" stroke-width="1"/>
<path d="M1067 834C1140.0 834 1140.0 864 1213 864" fill="none" stroke="#777c85" stroke-width="1"/>
<path d="M1067 834C1083.5 834 1083.5 882 1100 882" fill="none" stroke="#777c85" stroke-width="1"/>
<path d="M1068 871C1140.5 871 1140.5 864 1213 864" fill="none" stroke="#777c85" stroke-width="1"/>
<path d="M1068 871C1084.0 871 1084.0 882 1100 882" fill="none" stroke="#777c85" stroke-width="1"/>
<path d="M1176 882C1194.5 882 1194.5 864 1213 864" fill="none" stroke="#777c85" stroke-width="1"/>
<path d="M558 931H625M680 894H770" stroke="#2e3440" stroke-width="1"/>
<path d="M621.5 846L625 848L621.5 850Z" fill="#777c85"/>
<path d="M497.5 928L501 930L497.5 932Z" fill="#777c85"/>
<path d="M621.5 892L625 894L621.5 896Z" fill="#777c85"/>
<path d="M884.5 855L888 857L884.5 859Z" fill="#777c85"/>
<path d="M984.5 832L988 834L984.5 836Z" fill="#777c85"/>
<path d="M984.5 869L988 871L984.5 873Z" fill="#777c85"/>
<path d="M1096.5 880L1100 882L1096.5 884Z" fill="#777c85"/>
<path d="M1209.5 862L1213 864L1209.5 866Z" fill="#777c85"/>
<rect x="501" y="834" width="78" height="28" rx="2.5" fill="#9fdcd7"/>
<text x="507" y="851.0" font-family="Liberation Sans" font-size="10" fill="#1c1f24" letter-spacing="-0.1">ecom.raw_cu…</text>
<rect x="625" y="834" width="62" height="28" rx="2.5" fill="#b3e1f7"/>
<text x="631" y="851.0" font-family="Liberation Sans" font-size="10" fill="#1c1f24" letter-spacing="-0.1">stg_custo…</text>
<rect x="625" y="881" width="55" height="27" rx="2.5" fill="#b3e1f7"/>
<text x="631" y="897.5" font-family="Liberation Sans" font-size="10" fill="#1c1f24" letter-spacing="-0.1">orders</text>
<rect x="402" y="912" width="55" height="27" rx="2.5" fill="#b3e1f7"/>
<text x="408" y="928.5" font-family="Liberation Sans" font-size="10" fill="#1c1f24" letter-spacing="-0.1">stg_orders</text>
<rect x="501" y="917" width="57" height="27" rx="2.5" fill="#b3e1f7"/>
<text x="507" y="933.5" font-family="Liberation Sans" font-size="10" fill="#1c1f24" letter-spacing="-0.1">order_it…</text>
<rect x="625" y="917" width="104" height="27" rx="2.5" fill="#36504d"/>
<text x="631" y="933.5" font-family="Liberation Sans" font-size="10" fill="#1e2828" letter-spacing="-0.35">test_supply_costs_s…</text>
<rect x="770" y="881" width="118" height="27" rx="2.5" fill="#36504d"/>
<text x="776" y="897.5" font-family="Liberation Sans" font-size="10" fill="#1e2828" letter-spacing="-0.35">test_order_items_com…</text>
<rect x="888" y="844" width="54" height="28" rx="2.5" fill="#f48d9a"/>
<text x="894" y="861.0" font-family="Liberation Sans" font-size="10" fill="#1c1f24" letter-spacing="-0.1">custom…</text>
<rect x="988" y="821" width="79" height="27" rx="2.5" fill="#fadd8a"/>
<text x="994" y="837.5" font-family="Liberation Sans" font-size="10" fill="#1c1f24" letter-spacing="-0.1">count_lifetim…</text>
<rect x="988" y="857" width="80" height="28" rx="2.5" fill="#fadd8a"/>
<text x="994" y="874.0" font-family="Liberation Sans" font-size="10" fill="#1c1f24" letter-spacing="-0.1">lifetime_spen…</text>
<rect x="1100" y="869" width="76" height="27" rx="2.5" fill="#fadd8a"/>
<text x="1106" y="885.5" font-family="Liberation Sans" font-size="10" fill="#1c1f24" letter-spacing="-0.1">average_ord…</text>
<rect x="1213" y="851" width="85" height="27" rx="2.5" fill="#e1d5b9"/>
<text x="1219" y="867.5" font-family="Liberation Sans" font-size="10" fill="#1c1f24" letter-spacing="-0.1">customer_orde…</text>
<rect x="769" y="843" width="57" height="30" rx="3" fill="#b3e1f7" stroke="#f4f6f8" stroke-width="2"/>
<text x="776" y="860.5" font-family="Liberation Sans" font-size="10" fill="#1c1f24">customers</text>
</svg>
<div class="a" style="left:1204px;top:791px;width:297px;height:40px;border:1px solid #4a505c;border-radius:7px;background:#131820"></div>
<div class="b" style="left:1396px;top:792px;width:1px;height:38px;background:#4a505c"></div>
<div class="t" style="left:1216px;top:805px;font-size:13.5px;color:#eceef1;letter-spacing:-0.2px">2+customers+2</div>
<div class="bt" style="left:1408px;top:805px;letter-spacing:-0.35px">Update Graph</div>
<div class="a" style="left:1517px;top:791px;width:40px;height:40px;border:1px solid #4a505c;border-radius:7px;background:#131820"></div>
<svg style="left:1528px;top:802px" width="18" height="18" viewBox="0 0 18 18" fill="none" stroke="#eceef1" stroke-width="1.1"><path d="M1.5 5.5V2.7Q1.5 1.5 2.7 1.5H5.5M12.5 1.5H15.3Q16.5 1.5 16.5 2.7V5.5M16.5 12.5V15.3Q16.5 16.5 15.3 16.5H12.5M5.5 16.5H2.7Q1.5 16.5 1.5 15.3V12.5"/></svg>
<div class="a" style="left:1565px;top:791px;width:40px;height:40px;border:1px solid #4a505c;border-radius:7px;background:#131820"></div>
<svg style="left:1577px;top:803px" width="16" height="16" viewBox="0 0 16 16" fill="none" stroke="#eceef1" stroke-width="1.1"><path d="M14.2 9.6A6.3 6.3 0 1 1 8 3.4H12.3"/><path d="M10.3 1.2L12.5 3.4L10.3 5.6"/></svg>

<!-- ============ BOTTOM BAR ============ -->
<div class="b" style="left:0;top:989px;width:1625px;height:1px"></div>
<div class="a" style="left:0;top:990px;width:1625px;height:39px;background:#12171f"></div>
<div class="b" style="left:36px;top:990px;width:1px;height:39px"></div>
<svg style="left:12px;top:1005px" width="10" height="6" viewBox="0 0 10 6" fill="none" stroke="#d0d3d8" stroke-width="1.2"><path d="M1 5L5 1L9 5"/></svg>

<div class="a" style="left:40px;top:992px;width:1210px;height:37px;border-radius:8px 8px 0 0;background:#141a23"></div>
<div class="t" style="left:53px;top:1003px;font-size:13.5px;color:#a3a8b0;letter-spacing:-0.12px;-webkit-text-stroke:0.15px currentColor">dbt build --select &lt;model_name&gt;</div>
<div class="a" style="left:1262px;top:1000px;width:40px;height:20px;border:1px solid #5a606b;border-radius:10px"></div>
<div class="a" style="left:1265px;top:1003px;width:14px;height:14px;border-radius:7px;background:#e1e3e7"></div>
<div class="t" style="left:1315px;top:1003px;font-size:13.5px;font-weight:700;color:#e6e8eb;letter-spacing:-0.42px">Defer to staging/production</div>
<svg style="left:1484px;top:1003px" width="13" height="13" viewBox="0 0 13 13" fill="none" stroke="#7a808a" stroke-width="1"><circle cx="6.5" cy="6.5" r="5.8"/><path d="M4.7 5a1.8 1.8 0 1 1 2.6 1.6c-.6.3-.8.6-.8 1.3"/><circle cx="6.5" cy="9.6" r=".4" fill="#7a808a"/></svg>
<div class="a" style="left:1509px;top:998px;width:72px;height:24px;border-radius:12px;background:#165c3f"></div>
<svg style="left:1516px;top:1002px" width="16" height="16" viewBox="0 0 16 16" fill="none" stroke="#e6e8eb" stroke-width="1"><circle cx="8" cy="8" r="6.6" stroke-dasharray="2.2 0.4"/></svg>
<div class="bt" style="left:1538px;top:1003px;font-size:13.5px;letter-spacing:-0.7px">Ready</div>
<div class="a" style="left:1589px;top:994px;width:32px;height:32px;border:1px solid #4a505c;border-radius:6px"></div>
<svg style="left:1597px;top:1008px" width="16" height="4" viewBox="0 0 16 4" fill="#e6e8eb"><circle cx="3" cy="2" r="1.3"/><circle cx="8" cy="2" r="1.3"/><circle cx="13" cy="2" r="1.3"/></svg>


</body></html>
